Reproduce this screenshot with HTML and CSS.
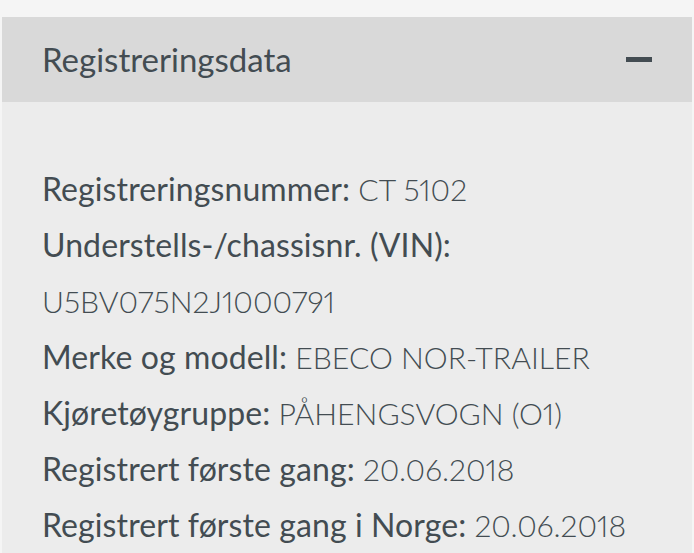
FILE: index.html
```html
<!DOCTYPE html>
<html lang="no">
<head>
<meta charset="utf-8">
<link rel="stylesheet" href="styles.css">
</head>
<body>
<section class="panel">
  <div class="panel-header">
    <h2 class="panel-title">Registreringsdata</h2>
    <span class="collapse-icon" aria-hidden="true"></span>
  </div>
  <div class="panel-body">
    <p class="row"><span class="label">Registreringsnummer:</span> <span class="value">CT 5102</span></p>
    <p class="row"><span class="label">Understells-/chassisnr. (VIN):</span> <span class="value">U5BV075N2J1000791</span></p>
    <p class="row"><span class="label">Merke og modell:</span> <span class="value">EBECO NOR-TRAILER</span></p>
    <p class="row"><span class="label">Kjøretøygruppe:</span> <span class="value">PÅHENGSVOGN (O1)</span></p>
    <p class="row"><span class="label">Registrert første gang:</span> <span class="value">20.06.2018</span></p>
    <p class="row"><span class="label">Registrert første gang i Norge:</span> <span class="value">20.06.2018</span></p>
  </div>
</section>
</body>
</html>
```
FILE: styles.css
```css
html, body {
  margin: 0;
  padding: 0;
  background: #f5f5f5;
}
body {
  padding: 17px 2px 0 2px;
  font-family: Lato, "Noto Sans", sans-serif;
  color: #434c52;
}
.panel {
  background: #ececec;
}
.panel-header {
  background: #d9d9d9;
  height: 85px;
  display: flex;
  align-items: center;
  justify-content: space-between;
  padding: 0 40px 0 40px;
}
.panel-title {
  margin: 0;
  font-size: 33px;
  font-weight: 400;
  line-height: 1;
}
.collapse-icon {
  width: 26px;
  height: 5px;
  background: #434c52;
}
.panel-body {
  padding: 59px 40px 40px 40px;
}
.row {
  margin: 0;
  font-size: 32px;
  line-height: 56px;
}
.label {
  font-weight: 400;
  letter-spacing: 0.1px;
}
.value {
  font-size: 30.2px;
  font-weight: 300;
  font-variant-numeric: proportional-nums;
}
```
